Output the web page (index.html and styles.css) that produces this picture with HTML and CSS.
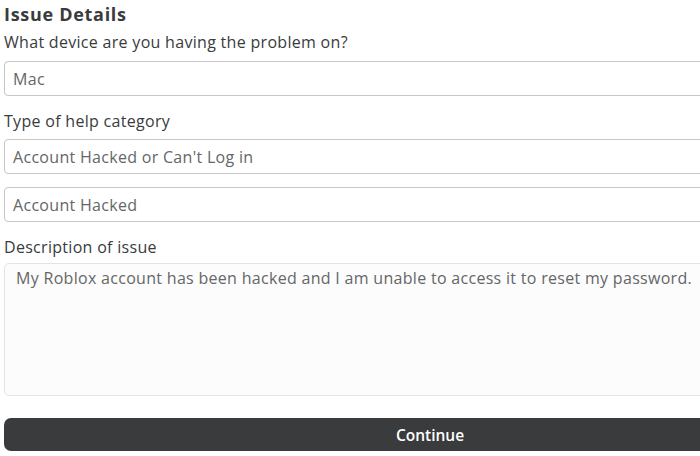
FILE: index.html
```html
<!DOCTYPE html>
<html lang="en">
<head>
<meta charset="utf-8">
<title>Issue Details</title>
<link rel="stylesheet" href="styles.css">
</head>
<body>
<form class="form">
  <h2 class="title">Issue Details</h2>
  <div class="field field-first">
    <label class="label">What device are you having the problem on?</label>
    <div class="input">Mac</div>
  </div>
  <div class="field">
    <label class="label">Type of help category</label>
    <div class="input">Account Hacked or Can't Log in</div>
    <div class="input">Account Hacked</div>
  </div>
  <div class="field">
    <label class="label">Description of issue</label>
    <div class="textarea">My Roblox account has been hacked and I am unable to access it to reset my password.</div>
  </div>
  <button type="button" class="btn">Continue</button>
</form>
</body>
</html>
```
FILE: styles.css
```css
html, body {
  margin: 0;
  padding: 0;
  background: #ffffff;
  overflow: hidden;
}
body {
  font-family: "Open Sans", "Liberation Sans", sans-serif;
  color: #393b3d;
  letter-spacing: 0.3px;
}
.form {
  width: 852px;
  padding: 2px 0 0 4px;
  display: flex;
  flex-direction: column;
}
.title {
  margin: 0;
  font-size: 18px;
  line-height: 24px;
  font-weight: 700;
  letter-spacing: 0.7px;
  color: #393b3d;
}
.field {
  display: flex;
  flex-direction: column;
  gap: 13px;
  margin-top: 15px;
}
.field-first {
  margin-top: 6px;
}
.label {
  font-size: 16px;
  line-height: 20px;
  color: #393b3d;
  margin-bottom: -5px;
}
.field-first .label {
  margin-bottom: -4px;
}
.input {
  box-sizing: border-box;
  height: 35px;
  border: 1px solid #c6c6c6;
  border-radius: 4px;
  padding: 0 8px;
  display: flex;
  align-items: center;
  font-size: 16px;
  color: #656667;
}
.textarea {
  box-sizing: border-box;
  height: 133px;
  margin-top: -2px;
  border: 1px solid #e3e3e3;
  border-radius: 5px;
  background: #fcfcfc;
  padding: 3px 11px;
  font-size: 16px;
  line-height: 22px;
  color: #656667;
}
.btn {
  margin-top: 22px;
  height: 33px;
  border: none;
  border-radius: 7px;
  background: #393b3d;
  color: #ffffff;
  font-family: inherit;
  font-size: 15.5px;
  font-weight: 600;
  letter-spacing: 0;
  padding: 0;
}
```
